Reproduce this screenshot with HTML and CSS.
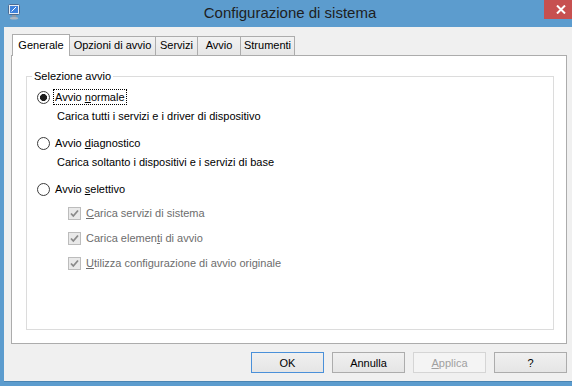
FILE: index.html
```html
<!DOCTYPE html>
<html lang="it">
<head>
    <meta charset="UTF-8">
    <title>Configurazione di sistema</title>
    <link rel="stylesheet" href="styles.css">
</head>
<body>
    <div class="window">
        <div class="titlebar">
            <svg class="app-icon" width="14" height="16" viewBox="0 0 14 16">
                <rect x="1.5" y="0.5" width="11" height="10" rx="1" fill="#e8eef5" stroke="#4a6b93"/>
                <rect x="3" y="2" width="8" height="7" fill="#3f82dc"/>
                <path d="M4.5 7.5 L9 3" stroke="#ffffff" stroke-width="1"/>
                <rect x="5" y="11" width="4" height="2" fill="#8d99a6"/>
                <ellipse cx="7" cy="14.2" rx="4.2" ry="1.3" fill="#aeb7c1"/>
            </svg>
            <div class="title">Configurazione di sistema</div>
            <div class="close">
                <svg width="10" height="9" viewBox="0 0 10 9">
                    <path d="M1 0.5 L9 8.5 M9 0.5 L1 8.5" stroke="#ffffff" stroke-width="2"/>
                </svg>
            </div>
        </div>

        <div class="client">
            <div class="tabs">
                <div class="tab tab-active">Generale</div>
                <div class="tab tab-opzioni">Opzioni di avvio</div>
                <div class="tab tab-servizi">Servizi</div>
                <div class="tab tab-avvio">Avvio</div>
                <div class="tab tab-strumenti">Strumenti</div>
            </div>

            <div class="panel">
                <div class="group">
                    <span class="group-title">Selezione avvio</span>

                    <div class="row row-first">
                        <span class="radio radio-on"></span>
                        <span class="label label-focus">Avvio <u>n</u>ormale</span>
                    </div>
                    <div class="desc">Carica tutti i servizi e i driver di dispositivo</div>

                    <div class="row row-option">
                        <span class="radio"></span>
                        <span class="label">Avvio <u>d</u>iagnostico</span>
                    </div>
                    <div class="desc">Carica soltanto i dispositivi e i servizi di base</div>

                    <div class="row row-option">
                        <span class="radio"></span>
                        <span class="label">Avvio <u>s</u>elettivo</span>
                    </div>

                    <div class="row check-row check-first">
                        <svg class="check" width="13" height="13" viewBox="0 0 13 13">
                            <rect x="0.5" y="0.5" width="12" height="12" fill="#e9e9e9" stroke="#bcbcbc"/>
                            <path d="M3 6.5 L5.3 9 L10 3.5" fill="none" stroke="#8a8a8a" stroke-width="1.8"/>
                        </svg>
                        <span class="label label-disabled"><u>C</u>arica servizi di sistema</span>
                    </div>
                    <div class="row check-row">
                        <svg class="check" width="13" height="13" viewBox="0 0 13 13">
                            <rect x="0.5" y="0.5" width="12" height="12" fill="#e9e9e9" stroke="#bcbcbc"/>
                            <path d="M3 6.5 L5.3 9 L10 3.5" fill="none" stroke="#8a8a8a" stroke-width="1.8"/>
                        </svg>
                        <span class="label label-disabled">Carica elemen<u>t</u>i di avvio</span>
                    </div>
                    <div class="row check-row">
                        <svg class="check" width="13" height="13" viewBox="0 0 13 13">
                            <rect x="0.5" y="0.5" width="12" height="12" fill="#e9e9e9" stroke="#bcbcbc"/>
                            <path d="M3 6.5 L5.3 9 L10 3.5" fill="none" stroke="#8a8a8a" stroke-width="1.8"/>
                        </svg>
                        <span class="label label-disabled"><u>U</u>tilizza configurazione di avvio originale</span>
                    </div>
                </div>
            </div>

            <div class="buttons">
                <button class="btn btn-default">OK</button>
                <button class="btn">Annulla</button>
                <button class="btn btn-disabled"><u>A</u>pplica</button>
                <button class="btn">?</button>
            </div>
        </div>
    </div>
</body>
</html>
```

FILE: styles.css
```css
/* Window frame */
body {
    margin: 0;
    background: #5c9cce;
    overflow: hidden;
    font-family: 'Liberation Sans', Arial, sans-serif;
    font-size: 11px;
    color: #000;
}

.window {
    width: 580px;
    height: 386px;
}

.titlebar {
    position: relative;
    height: 27px;
}

.title {
    text-align: center;
    font-size: 15px;
    line-height: 26px;
    color: #1e1e1e;
}

.app-icon {
    position: absolute;
    left: 7px;
    top: 4px;
}

.close {
    position: absolute;
    left: 544px;
    top: 0;
    width: 36px;
    height: 19px;
    background: #c75050;
    display: flex;
    align-items: center;
    padding-left: 12px;
    box-sizing: border-box;
}

.client {
    margin-left: 4px;
    width: 572px;
    height: 354px;
    box-sizing: border-box;
    padding: 7px 10px 0 7px;
    background: #f0f0f0;
    box-shadow: 0 1px 0 #4a85b3;
}

/* Tabs */
.tabs {
    display: flex;
    align-items: flex-start;
    height: 21px;
    margin-left: 1px;
}

.tab {
    box-sizing: border-box;
    height: 19px;
    margin-top: 2px;
    margin-left: -1px;
    border: 1px solid #acacac;
    border-bottom: none;
    background: linear-gradient(#f2f2f2, #e6e6e6);
    text-align: center;
    line-height: 17px;
}

.tab-active {
    position: relative;
    z-index: 1;
    width: 58px;
    height: 22px;
    margin-top: 0;
    margin-left: 0;
    background: #fff;
    line-height: 20px;
}

.tab-opzioni { width: 87px; }
.tab-servizi { width: 43px; }
.tab-avvio { width: 44px; }
.tab-strumenti { width: 55px; }

.panel {
    box-sizing: border-box;
    width: 556px;
    height: 289px;
    border: 1px solid #acacac;
    background: #fff;
    padding-top: 20px;
}

/* Group box */
.group {
    position: relative;
    box-sizing: border-box;
    width: 528px;
    height: 254px;
    margin-left: 14px;
    border: 1px solid #dcdcdc;
    padding: 12px 0 0 10px;
}

.group-title {
    position: absolute;
    top: -8px;
    left: 5px;
    padding: 0 2px;
    background: #fff;
    line-height: 14px;
}

.row {
    display: flex;
    align-items: center;
    height: 16px;
}

.row-option {
    margin-top: 11px;
}

.radio {
    box-sizing: border-box;
    width: 13px;
    height: 13px;
    border: 1px solid #3c3c3c;
    border-radius: 50%;
    background: #fff;
    margin-right: 3px;
}

.radio-on {
    background: radial-gradient(circle, #1c1c1c 3.2px, #fff 3.8px);
}

.label {
    padding: 0 1px;
    border: 1px solid transparent;
    line-height: 14px;
}

.label-focus {
    border: 1px dotted #000;
}

.label-disabled {
    color: #6d6d6d;
}

.desc {
    margin-top: 3px;
    padding-left: 20px;
    line-height: 16px;
}

.check-row {
    padding-left: 31px;
    margin-top: 9px;
}

.check-first {
    margin-top: 8px;
}

.check {
    margin-right: 3px;
}

/* Buttons */
.buttons {
    display: flex;
    justify-content: flex-end;
    gap: 8px;
    width: 556px;
    margin-top: 8px;
}

.btn {
    box-sizing: border-box;
    width: 73px;
    height: 21px;
    padding: 0;
    border: 1px solid #acacac;
    background: linear-gradient(#f0f0f0, #e5e5e5);
    font-family: 'Liberation Sans', Arial, sans-serif;
    font-size: 11px;
    color: #000;
}

.btn-default {
    border-color: #4a90d9;
}

.btn-disabled {
    border-color: #d5d5d5;
    background: #f4f4f4;
    color: #a0a0a0;
}
```
